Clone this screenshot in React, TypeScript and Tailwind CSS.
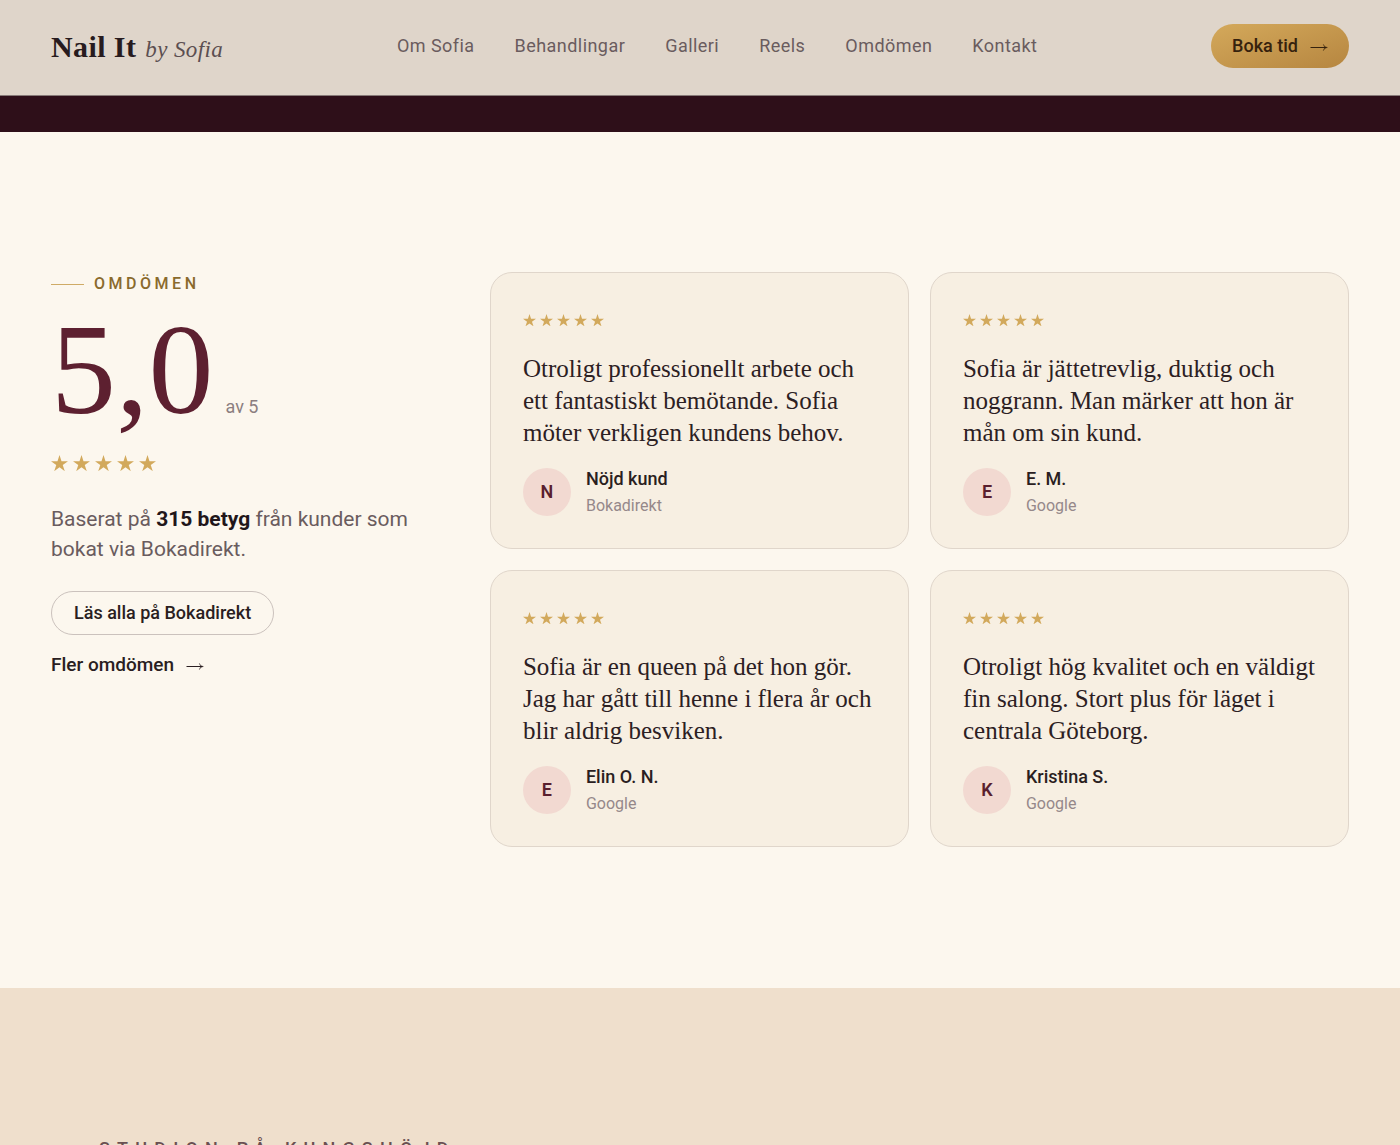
const navLinks = [
  { label: 'Om Sofia', href: '#om' },
  { label: 'Behandlingar', href: '#behandlingar' },
  { label: 'Galleri', href: '#galleri' },
  { label: 'Reels', href: '#reels' },
  { label: 'Omdömen', href: '#omdomen' },
  { label: 'Kontakt', href: '#kontakt' },
]

type Review = { quote: string; name: string; source: string }

const reviews: Review[] = [
  {
    quote: 'Otroligt professionellt arbete och ett fantastiskt bemötande. Sofia möter verkligen kundens behov.',
    name: 'Nöjd kund',
    source: 'Bokadirekt',
  },
  {
    quote: 'Sofia är jättetrevlig, duktig och noggrann. Man märker att hon är mån om sin kund.',
    name: 'E. M.',
    source: 'Google',
  },
  {
    quote: 'Sofia är en queen på det hon gör. Jag har gått till henne i flera år och blir aldrig besviken.',
    name: 'Elin O. N.',
    source: 'Google',
  },
  {
    quote: 'Otroligt hög kvalitet och en väldigt fin salong. Stort plus för läget i centrala Göteborg.',
    name: 'Kristina S.',
    source: 'Google',
  },
]

function Stars({ large = false }: { large?: boolean }) {
  return (
    <div role="img" aria-label="5 av 5 stjärnor" className={`flex items-center text-[#d2a95c] ${large ? 'gap-[5px]' : 'gap-1'}`}>
      {[1, 2, 3, 4, 5].map((n) => (
        <svg key={n} viewBox="0 0 20 19" fill="currentColor" className={large ? 'w-[17px]' : 'w-[13px]'}>
          <path d="M10 0l2.36 7.26H20l-6.18 4.49L16.18 19 10 14.52 3.82 19l2.36-7.25L0 7.26h7.64z" />
        </svg>
      ))}
    </div>
  )
}

function Arrow() {
  return (
    <svg viewBox="0 0 18 10" fill="none" stroke="currentColor" className="w-[18px] shrink-0" aria-hidden="true">
      <path d="M0.5 6.5h16" strokeWidth="1" />
      <path d="M13.4 3.4C14 5.2 15.2 6.1 17.4 6.5 15.2 6.9 14 7.8 13.4 9.6L14.8 6.5z" fill="currentColor" strokeWidth="0.4" />
    </svg>
  )
}

function ReviewCard({ review }: { review: Review }) {
  return (
    <article className="rounded-[22px] border border-[#e0d6cb] bg-[#f7efe2] p-8">
      <div className="flex h-[30px] items-center">
        <Stars />
      </div>
      <blockquote className="mt-[18px] font-['Liberation_Serif',serif] text-[25px] leading-8 text-[#2c2023]">
        {review.quote}
      </blockquote>
      <div className="mt-[19px] flex items-center gap-[15px]">
        <div className="flex size-12 items-center justify-center rounded-full bg-[#f2d9d1] text-lg font-semibold text-[#5a1f2e]">
          {review.name[0]}
        </div>
        <div className="flex flex-col gap-[6px]">
          <span className="text-lg leading-[21px] font-medium text-[#2a1e21]">{review.name}</span>
          <span className="text-base leading-[21px] text-[#95888a]">{review.source}</span>
        </div>
      </div>
    </article>
  )
}

export default function App() {
  return (
    <div className="h-screen overflow-y-auto bg-[#fcf7ee] font-['Roboto',sans-serif] text-[#2a1e21] [scrollbar-width:none]">
      <header className="sticky top-0 z-10 flex h-24 items-center justify-between border-b border-[#877a78] bg-[#dfd5ca] px-[51px] pb-[3px]">
        <a href="#top" className="flex items-baseline gap-[9px] font-['Liberation_Serif',serif] tracking-wide">
          <span className="text-[30px] font-bold text-[#271b1e]">Nail It</span>
          <span className="text-[23px] text-[#5c4f51] italic">by Sofia</span>
        </a>
        <nav className="flex gap-10 text-lg tracking-wide text-[#6a5c5e]">
          {navLinks.map((l) => (
            <a key={l.href} href={l.href}>{l.label}</a>
          ))}
        </nav>
        <a
          href="#boka"
          className="flex h-11 items-center gap-3 rounded-full bg-linear-to-br from-[#d4a95b] to-[#b68640] px-[21px] text-lg font-medium text-[#36220d]"
        >
          Boka tid
          <Arrow />
        </a>
      </header>

      <div className="h-9 bg-[#2e0f19]" />

      <section id="omdomen" className="grid grid-cols-[5fr_12fr] gap-[81px] px-[51px] pt-[140px] pb-[141px]">
        <div>
          <p className="flex h-6 items-center gap-[10px] text-base font-medium tracking-[0.22em] text-[#8a6a2c]">
            <span className="h-px w-[33px] bg-[#cfab66]" />
            OMDÖMEN
          </p>
          <div className="mt-2 flex items-baseline gap-3">
            <span className="font-['Liberation_Serif',serif] text-[130px] leading-[130px] text-[#5d2030]">5,0</span>
            <span className="text-lg text-[#8b7e80]">av 5</span>
          </div>
          <div className="mt-[18px] flex h-[22px] items-center">
            <Stars large />
          </div>
          <p className="mt-[30px] text-[21px] leading-[30px] text-[#6a5c5e]">
            Baserat på <strong className="font-bold text-[#21161a]">315 betyg</strong> från kunder som bokat via Bokadirekt.
          </p>
          <div className="mt-[27px] flex flex-col items-start gap-4">
            <a href="#bokadirekt" className="flex h-11 items-center rounded-full border border-[#cbc2bd] px-[22px] text-lg font-medium">
              Läs alla på Bokadirekt
            </a>
            <a href="#fler" className="flex items-center gap-3 text-[19px] font-medium">
              Fler omdömen
              <Arrow />
            </a>
          </div>
        </div>

        <div className="grid grid-cols-2 items-start gap-[21px]">
          {reviews.map((r) => (
            <ReviewCard key={r.name} review={r} />
          ))}
        </div>
      </section>

      <section id="kontakt" className="bg-[#efdfcc] px-[99px] pt-[149px] pb-[140px]">
        <h2 className="text-lg leading-6 font-medium tracking-[0.4em] text-[#6a5052]">STUDION PÅ KUNGSHÖJD</h2>
      </section>
    </div>
  )
}
